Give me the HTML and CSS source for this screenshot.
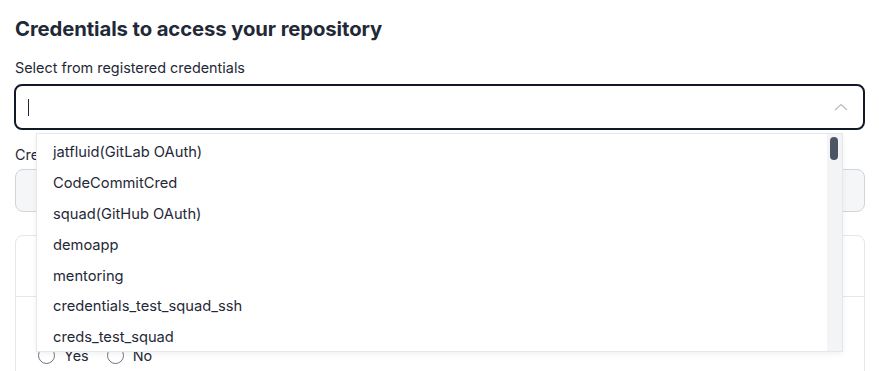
FILE: index.html
```html
<!DOCTYPE html>
<html lang="en">

<head>
    <meta charset="UTF-8">
    <meta name="viewport" content="width=device-width, initial-scale=1.0">
    <title>Credentials</title>
    <link rel="stylesheet" href="styles.css">
</head>

<body>
    <div class="page">
        <h2 class="page_title">Credentials to access your repository</h2>

        <div class="field">
            <label class="field_label">Select from registered credentials</label>
            <div class="select">
                <div class="select_input">
                    <span class="caret"></span>
                    <svg class="chevron" width="14" height="8" viewBox="0 0 14 8">
                        <path d="M1 7 L7 1.5 L13 7" fill="none" stroke="#b8bcc4" stroke-width="1.2" />
                    </svg>
                </div>
                <!-- 下拉列表 -->
                <div class="dropdown">
                    <ul class="dropdown_list">
                        <li>jatfluid(GitLab OAuth)</li>
                        <li>CodeCommitCred</li>
                        <li>squad(GitHub OAuth)</li>
                        <li>demoapp</li>
                        <li>mentoring</li>
                        <li>credentials_test_squad_ssh</li>
                        <li>creds_test_squad</li>
                    </ul>
                    <div class="scroll_track"><div class="scroll_thumb"></div></div>
                </div>
            </div>
        </div>

        <div class="field field_second">
            <label class="field_label">Create new credentials</label>
            <div class="disabled_box"></div>
        </div>

        <div class="card">
            <div class="card_head"></div>
            <div class="card_body">
                <div class="radios">
                    <label class="radio"><span class="radio_dot"></span>Yes</label>
                    <label class="radio"><span class="radio_dot"></span>No</label>
                </div>
            </div>
        </div>
    </div>
</body>

</html>
```

FILE: styles.css
```css
* {
    margin: 0;
    padding: 0;
    box-sizing: border-box;
}

body {
    font-family: Inter, "Liberation Sans", sans-serif;
    color: #1f2937;
    background-color: #fff;
    overflow: hidden;
}

.page {
    padding: 15px 14px 0 15px;
}

.page_title {
    font-size: 20.3px;
    font-weight: 700;
    line-height: 28px;
    color: #1f2937;
    letter-spacing: -0.1px;
}

.field {
    margin-top: 15px;
}

.field_label {
    display: block;
    font-size: 14.4px;
    line-height: 20px;
    color: #1f2937;
    margin-bottom: 6px;
}

.select {
    position: relative;
    margin-left: -1px;
}

.select_input {
    height: 46px;
    border: 2px solid #111827;
    border-radius: 8px;
    display: flex;
    align-items: center;
    justify-content: space-between;
    padding: 0 15px 0 12px;
}

.caret {
    width: 1px;
    height: 17px;
    background-color: #1f2937;
}

.chevron {
    display: block;
}

.dropdown {
    position: absolute;
    top: 49px;
    left: 22px;
    width: 807px;
    height: 219px;
    background-color: #fff;
    border: 1px solid #e5e7eb;
    box-shadow: 0 2px 6px rgba(0, 0, 0, .06);
    display: flex;
    z-index: 10;
}

.dropdown_list {
    flex: 1;
    list-style: none;
    padding-top: 3px;
}

.dropdown_list li {
    height: 30.8px;
    display: flex;
    align-items: center;
    padding-left: 16px;
    font-size: 14.7px;
    color: #1f2937;
}

.scroll_track {
    width: 15px;
    background-color: #f3f4f6;
    padding: 3px 0 0 3px;
}

.scroll_thumb {
    width: 8px;
    height: 23px;
    border-radius: 4px;
    background-color: #4b5563;
}

.field_second {
    margin-top: 15px;
}

.disabled_box {
    height: 43px;
    border: 1px solid #d1d5db;
    border-radius: 8px;
    background-color: #f5f6f8;
    margin-top: -2px;
}

.card {
    margin-top: 23px;
    border: 1px solid #e5e7eb;
    border-radius: 8px;
    height: 200px;
}

.card_head {
    height: 61px;
    border-bottom: 1px solid #e5e7eb;
}

.card_body {
    padding: 50px 22px 0 22px;
}

.radios {
    display: flex;
    gap: 18px;
}

.radio {
    display: flex;
    align-items: center;
    gap: 9px;
    font-size: 14.4px;
    color: #1f2937;
}

.radio_dot {
    width: 17px;
    height: 17px;
    border: 1px solid #6b7280;
    border-radius: 50%;
}
```
